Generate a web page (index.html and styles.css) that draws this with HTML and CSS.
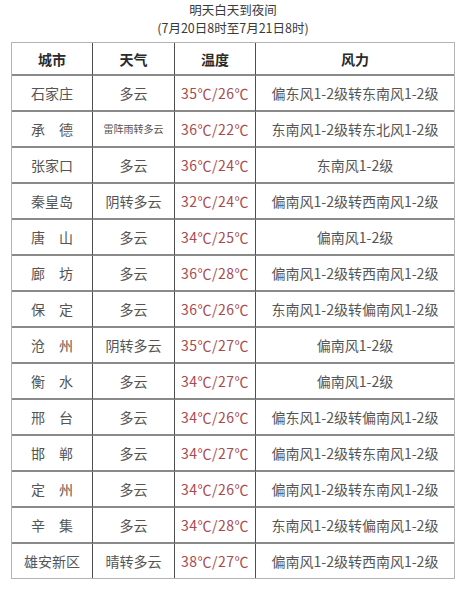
FILE: index.html
```html
<!DOCTYPE html>
<html lang="zh">
<head>
<meta charset="utf-8">
<title>明天白天到夜间</title>
<link rel="stylesheet" href="styles.css">
</head>
<body>
<div class="page">
  <div class="title">明天白天到夜间<br>(7月20日8时至7月21日8时)</div>
  <table class="wx">
    <colgroup>
      <col class="c1"><col class="c2"><col class="c3"><col class="c4">
    </colgroup>
    <thead>
      <tr><th>城市</th><th>天气</th><th>温度</th><th>风力</th></tr>
    </thead>
    <tbody>
      <tr><td>石家庄</td><td>多云</td><td class="t">35℃/26℃</td><td>偏东风1-2级转东南风1-2级</td></tr>
      <tr><td>承　德</td><td class="sm">雷阵雨转多云</td><td class="t">36℃/22℃</td><td>东南风1-2级转东北风1-2级</td></tr>
      <tr><td>张家口</td><td>多云</td><td class="t">36℃/24℃</td><td>东南风1-2级</td></tr>
      <tr><td>秦皇岛</td><td>阴转多云</td><td class="t">32℃/24℃</td><td>偏南风1-2级转西南风1-2级</td></tr>
      <tr><td>唐　山</td><td>多云</td><td class="t">34℃/25℃</td><td>偏南风1-2级</td></tr>
      <tr><td>廊　坊</td><td>多云</td><td class="t">36℃/28℃</td><td>偏南风1-2级转西南风1-2级</td></tr>
      <tr><td>保　定</td><td>多云</td><td class="t">36℃/26℃</td><td>东南风1-2级转偏南风1-2级</td></tr>
      <tr><td>沧　州</td><td>阴转多云</td><td class="t">35℃/27℃</td><td>偏南风1-2级</td></tr>
      <tr><td>衡　水</td><td>多云</td><td class="t">34℃/27℃</td><td>偏南风1-2级</td></tr>
      <tr><td>邢　台</td><td>多云</td><td class="t">34℃/26℃</td><td>偏东风1-2级转偏南风1-2级</td></tr>
      <tr><td>邯　郸</td><td>多云</td><td class="t">34℃/27℃</td><td>偏南风1-2级转东南风1-2级</td></tr>
      <tr><td>定　州</td><td>多云</td><td class="t">34℃/26℃</td><td>偏南风1-2级转东南风1-2级</td></tr>
      <tr><td>辛　集</td><td>多云</td><td class="t">34℃/28℃</td><td>东南风1-2级转偏南风1-2级</td></tr>
      <tr><td>雄安新区</td><td>晴转多云</td><td class="t">38℃/27℃</td><td>偏南风1-2级转西南风1-2级</td></tr>
    </tbody>
  </table>
</div>
</body>
</html>
```
FILE: styles.css
```css
html, body {
  margin: 0;
  padding: 0;
  background: #ffffff;
}
.page {
  padding: 1px 9px 0 11px;
  font-family: "Noto Sans CJK SC", sans-serif;
}
.title {
  text-align: center;
  color: #3a3a3a;
  font-size: 12.5px;
  line-height: 18.2px;
  height: 41px;
}
.wx {
  width: 444px;
  border-collapse: separate;
  border-spacing: 0;
  border: 1px solid #b4b4b4;
  table-layout: fixed;
}
.c1 { width: 81px; }
.c2 { width: 82px; }
.c3 { width: 81px; }
.c4 { width: auto; }
.wx th, .wx td {
  padding: 0;
  text-align: center;
  vertical-align: middle;
  border-right: 1px solid #4f4f4f;
  border-bottom: 2px solid #8a8a8a;
  white-space: nowrap;
  font-size: 14px;
  line-height: 16px;
}
.wx th:last-child, .wx td:last-child {
  border-right: none;
}
.wx tbody tr:last-child td {
  border-bottom: none;
  height: 34px;
}
.wx th {
  height: 31px;
  font-weight: 700;
  color: #2a2a2a;
}
.wx td {
  height: 34px;
  color: #555555;
}
.wx td.t {
  color: #a84a4f;
  letter-spacing: 0.5px;
}
.wx td.sm {
  font-size: 10px;
}
```
